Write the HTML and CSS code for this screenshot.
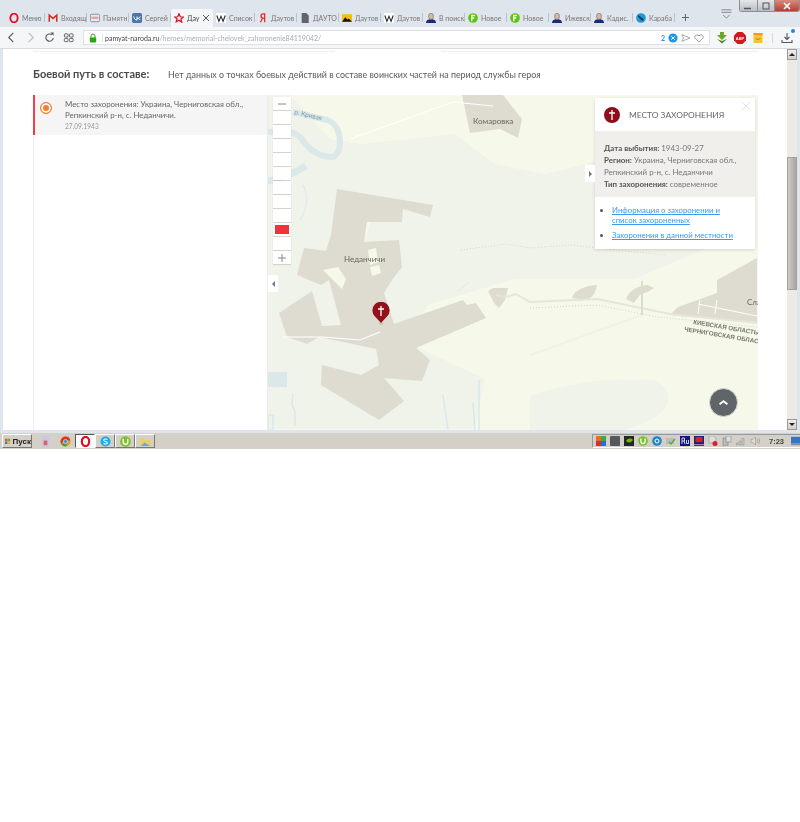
FILE: index.html
```html
<!DOCTYPE html>
<html lang="ru">
<head>
    <meta charset="UTF-8">
    <meta name="viewport" content="width=device-width, initial-scale=1.0">
    <title>Память народа</title>
    <link rel="stylesheet" href="styles.css">
</head>
<body>
    <svg class="sprites" width="0" height="0">
        <symbol id="ic-person" viewBox="0 0 12 12">
            <path d="M0 12c0-3 2-4 4-4.500h4c2 .5 4 1.500 4 4.500z" fill="#1c2a78"/>
            <ellipse cx="6" cy="4" rx="3" ry="3.700" fill="#d8b9a0" stroke="#555" stroke-width=".6"/>
        </symbol>
        <symbol id="ic-f" viewBox="0 0 12 12">
            <circle cx="6" cy="6" r="5.800" fill="#5ac40e"/>
            <path d="M4.500 10V3h4M4.500 6h3" fill="none" stroke="#fff" stroke-width="1.600"/>
        </symbol>
        <symbol id="ic-w" viewBox="0 0 12 12">
            <rect width="12" height="12" rx="1.500" fill="#fff"/>
            <path d="M1 3l2.500 7L6 4l2.500 6L11 3" fill="none" stroke="#222" stroke-width="1.300"/>
        </symbol>
        <symbol id="ic-cross" viewBox="0 0 16 16">
            <path d="M8 3v10M5 6h6" fill="none" stroke="#fff" stroke-width="1.300"/>
        </symbol>
        <symbol id="tray-ut" viewBox="0 0 12 12">
            <circle cx="6" cy="6" r="5.800" fill="#7cc02c"/>
            <path d="M3.500 3v3.500a2.500 2.500 0 0 0 5 0V3" fill="none" stroke="#fff" stroke-width="1.500"/>
        </symbol>
    </svg>

    <div class="window">
        <div class="tabbar">
            <div class="tab tab-menu">
                <svg class="fav" viewBox="0 0 12 12"><ellipse cx="6" cy="6" rx="4.400" ry="5.200" fill="none" stroke="#e0101f" stroke-width="2.200"/></svg>
                <span class="tab-text">Меню</span>
            </div>
            <div class="tab">
                <svg class="fav" viewBox="0 0 12 12"><path d="M1.500 10.500V2.500L6 6.500l4.500-4v8" fill="none" stroke="#d22c20" stroke-width="1.800"/></svg>
                <span class="tab-text">Входящ</span>
            </div>
            <div class="tab">
                <svg class="fav" viewBox="0 0 12 12"><rect x=".5" y="1.500" width="11" height="9" rx="1.500" fill="#e4e8f0" stroke="#7c8398"/><rect x="2" y="4.500" width="8" height="2.500" fill="#e79a9a"/></svg>
                <span class="tab-text">Памятн</span>
            </div>
            <div class="tab">
                <svg class="fav" viewBox="0 0 12 12"><rect width="12" height="12" rx="2" fill="#4a76a8"/><path d="M2 4c.5 3 2 4.500 4 4.500V4M10 4C9.500 5.500 8 6.500 6 6.500c2 0 3.500 1 4 2" fill="none" stroke="#fff" stroke-width="1.100"/></svg>
                <span class="tab-text">Сергей</span>
            </div>
            <div class="tab tab-active">
                <svg class="fav" viewBox="0 0 12 12"><path d="M6 1l1.500 3.500 3.800.3-2.900 2.500.9 3.700L6 8.600l-3.300 1.900.9-3.700L.7 4.800l3.800-.3z" fill="none" stroke="#d8102a" stroke-width="1.500"/></svg>
                <span class="tab-text">Дау</span>
                <svg class="tab-close" viewBox="0 0 8 8"><path d="M1 1l6 6M7 1L1 7" stroke="#555" stroke-width="1"/></svg>
            </div>
            <div class="tab">
                <svg class="fav"><use href="#ic-w"/></svg>
                <span class="tab-text">Список</span>
            </div>
            <div class="tab">
                <svg class="fav" viewBox="0 0 12 12"><path d="M8 11V1H6.500C4.500 1 3.500 2 3.500 3.500S4.500 6 6.500 6H8M5.500 6L3 11" fill="none" stroke="#e8262a" stroke-width="1.500"/></svg>
                <span class="tab-text">Даутов</span>
            </div>
            <div class="tab">
                <svg class="fav" viewBox="0 0 12 12"><path d="M2 0h5.500L10.500 3v9H2z" fill="#60646b"/></svg>
                <span class="tab-text">ДАУТО</span>
            </div>
            <div class="tab">
                <svg class="fav" viewBox="0 0 12 12"><rect y="1.500" width="12" height="9" fill="#f5c000"/><path d="M0 10.500L4 5l2.500 3L8 6.500l4 4z" fill="#111"/></svg>
                <span class="tab-text">Даутов</span>
            </div>
            <div class="tab">
                <svg class="fav"><use href="#ic-w"/></svg>
                <span class="tab-text">Даутов</span>
            </div>
            <div class="tab">
                <svg class="fav"><use href="#ic-person"/></svg>
                <span class="tab-text">В поиск</span>
            </div>
            <div class="tab">
                <svg class="fav"><use href="#ic-f"/></svg>
                <span class="tab-text">Новое</span>
            </div>
            <div class="tab">
                <svg class="fav"><use href="#ic-f"/></svg>
                <span class="tab-text">Новое</span>
            </div>
            <div class="tab">
                <svg class="fav"><use href="#ic-person"/></svg>
                <span class="tab-text">Ижевск</span>
            </div>
            <div class="tab">
                <svg class="fav"><use href="#ic-person"/></svg>
                <span class="tab-text">Кадис.</span>
            </div>
            <div class="tab">
                <svg class="fav" viewBox="0 0 12 12"><circle cx="6" cy="6" r="5.800" fill="#1d9bd8"/><path d="M2.500 2.500l7 5-2 2-5-5z" fill="#1a3350"/></svg>
                <span class="tab-text">Караба</span>
            </div>
            <svg class="tab-plus" viewBox="0 0 8 8"><path d="M4 0v8M0 4h8" stroke="#666" stroke-width="1.200"/></svg>
            <svg class="tab-list" viewBox="0 0 14 12"><path d="M1 1h12M1 4h12" stroke="#777"/><path d="M3 7l4 4 4-4" fill="none" stroke="#777"/></svg>
            <div class="win-controls">
                <div class="win-btn"><svg viewBox="0 0 10 8"><path d="M1 6.500h7" stroke="#555" stroke-width="1.500"/></svg></div>
                <div class="win-btn"><svg viewBox="0 0 10 8"><rect x="2" y="1" width="6" height="6" fill="none" stroke="#555"/></svg></div>
                <div class="win-btn win-close"><svg viewBox="0 0 10 8"><path d="M2 1l6 6M8 1L2 7" stroke="#fff" stroke-width="1.600"/></svg></div>
            </div>
        </div>

        <div class="toolbar">
            <div class="nav">
                <svg class="nav-ic" viewBox="0 0 12 12"><path d="M8 1L3 6l5 5" fill="none" stroke="#555" stroke-width="1.200"/></svg>
                <svg class="nav-ic" viewBox="0 0 12 12"><path d="M4 1l5 5-5 5" fill="none" stroke="#bbb" stroke-width="1.200"/></svg>
                <svg class="nav-ic" viewBox="0 0 12 12"><path d="M10 6.500A4 4 0 1 1 8.500 3" fill="none" stroke="#555" stroke-width="1.200"/><path d="M7 0.500l3.500 0v3.500z" fill="#555"/></svg>
                <svg class="nav-ic" viewBox="0 0 12 12"><g fill="none" stroke="#555"><rect x="1.500" y="2" width="4" height="3.500" rx="1"/><rect x="7" y="2" width="4" height="3.500" rx="1"/><rect x="1.500" y="7" width="4" height="3.500" rx="1"/><rect x="7" y="7" width="4" height="3.500" rx="1"/></g></svg>
            </div>
            <div class="address">
                <svg class="lock" viewBox="0 0 10 12"><path d="M2.500 6V3.500a2.500 2.500 0 0 1 5 0V6" fill="none" stroke="#2e9e1e" stroke-width="1.200"/><rect x="1" y="5.500" width="8" height="6" rx="1" fill="#23a80f"/></svg>
                <span class="url"><b>pamyat-naroda.ru</b>/heroes/memorial-chelovek_zahoronenie84119042/</span>
                <span class="ext-count">2</span>
                <svg class="addr-ic" viewBox="0 0 12 12"><circle cx="6" cy="6" r="5.500" fill="#1f96ee"/><path d="M4 4l4 4M8 4L4 8" stroke="#fff" stroke-width="1.200"/></svg>
                <svg class="addr-ic" viewBox="0 0 12 12"><path d="M1 2l10 4-10 4 2-4z" fill="none" stroke="#999"/></svg>
                <svg class="addr-ic" viewBox="0 0 12 12"><path d="M6 11L1.500 6.500C-.5 3.500 3.500.5 6 3.500c2.500-3 6.500 0 4.500 3z" fill="none" stroke="#888"/></svg>
            </div>
            <div class="tools">
                <svg class="tool" viewBox="0 0 12 12"><path d="M4 0h4v3h3L6 8 1 3h3z" fill="#6fa52a"/><path d="M1 7l5 4.500L11 7l-5 2z" fill="#4c8620"/></svg>
                <svg class="tool" viewBox="0 0 12 12"><path d="M3.500 0h5L12 3.500v5L8.500 12h-5L0 8.500v-5z" fill="#d5181e"/><text x="6" y="7.800" class="abp">ABP</text></svg>
                <svg class="tool" viewBox="0 0 12 12"><rect x="1.500" y="1" width="9" height="10" fill="#f7c233"/><rect x="1.500" y="1" width="9" height="2" fill="#ee9a20"/><path d="M4 6c.5 2 3.500 2 4 0" fill="none" stroke="#c4701a"/></svg>
                <i class="tool-sep"></i>
                <div class="download">
                    <svg class="tool" viewBox="0 0 12 12"><path d="M6 1v6M3.500 5L6 7.500 8.500 5M1 8v2.500h10V8" fill="none" stroke="#555" stroke-width="1.100"/></svg>
                    <i class="download-dot"></i>
                </div>
            </div>
        </div>

        <div class="viewport">
            <main class="page">
                <div class="page-rule"><i></i><i></i></div>
                <div class="route-head">
                    <h2>Боевой путь в составе:</h2>
                    <p>Нет данных о точках боевых действий в составе воинских частей на период службы героя</p>
                </div>
                <div class="route">
                    <aside class="points">
                        <div class="point">
                            <span class="point-radio"></span>
                            <div>
                                <p>Место захоронения: Украина, Черниговская обл., Репкинский р-н, с. Неданчичи.</p>
                                <time>27.09.1943</time>
                            </div>
                        </div>
                    </aside>
                    <div class="map">
                        <svg class="map-art" viewBox="0 0 490 335" preserveAspectRatio="none">
                            <rect width="490" height="335" fill="#f6f9ea"/>
                            <!-- серо-зелёные массивы -->
                            <path d="M0 0h22l40 44 30 5 95-10 40 30 50 10 60-15 40 60 60 30-70 30-120 0-85 25-30 35 85 40-10 50H0z" fill="#f0f3ea"/>
                            <path d="M262 300c40-12 80-18 125-15 30 20 5 40-30 50H262z" fill="#f0f3ea"/>
                            <path d="M200 38l15-8 8 12-5 10-8-6z M82 30c-3-15-12-25-22-33l-10 8 20 30z" fill="#f6f9ea"/>
                            <path d="M80 120l15-8 10 8-10 30-20 8z" fill="#f6f9ea"/>
                            <!-- вода -->
                            <path d="M25 17l34 8c10 3 13 14 13 22 0 8-3 16-10 15-12-1-22-8-30-20-6-6-20-6-32-5" fill="none" stroke="#dbe8ea" stroke-width="6"/>
                            <path d="M0 86c14-2 26-8 38-15" fill="none" stroke="#dbe8ea" stroke-width="7"/>
                            <path d="M35 90c6 10 4 25-3 35" fill="none" stroke="#dbe8ea"/>
                            <rect x="0" y="277" width="19" height="15" fill="#dbe8ea"/>
                            <path d="M25 298l-1 12 3 6 0 15M175 300l5 35M205 308l2 27M211 285v50M0 320h5v15H0z" fill="none" stroke="#dbe8ea" stroke-width="1.500"/>
                            <!-- застройка -->
                            <path d="M194 0h41l19 24-4 19-18-9-30 4z" fill="#dedcd0"/>
                            <path d="M69 94l96 16-3 12-27-8-1 13h-35l-3 20 35-2 3 27-10 13-8 13 10 31 69-24 4 5 9-2 10 15-70 30 14 12-8 21-38-3 20 23-25 19-58-35 1-20 39 10 18-10-3-16-57-12-12 7-20-7-8-24 33-22 10 35 19-1-12-45-8 5-24-10 7-27 22 3 5-16z" fill="#dedcd0"/>
                            <path d="M449 185l40-22v64l-67-5-20-2 8-8 39-14z" fill="#dedcd0"/>
                            <path d="M220 196l5-3 15 0-3 12-6 8-5-5z M304 203c2-8 12-12 25-13-1 8-6 14-10 15z M358 204c3-8 10-13 22-14l6 3c-5 4-8 4-14 7l-6 8z" fill="#dedcd0"/>
                            <path d="M100 155l8-2 2 14-8 3z M102 172l9-2 2 8-9 3z M55 175l15-3 8 12-4 10z" fill="#f6f9ea"/>
                            <path d="M432 205l-2 14M449 205l-2 14M430 209l59 12" fill="none" stroke="#fff" stroke-width="1"/>
                            <!-- дороги -->
                            <path d="M82 44L185 7l40 4M15 242l40 0 37 3 20-8" fill="none" stroke="#fff" stroke-width="1.200"/>
                            <path d="M228 200l10 2 10-3 14 8 67-3 73 15 87 9" fill="none" stroke="#e6e5da" stroke-width="2"/>
                            <path d="M262 213l67-3 60 12 100 10" fill="none" stroke="#d5d4c8" stroke-dasharray="1 2"/>
                            <path d="M193 155l15-2 30-4 25 4 40-3 45 5 50 5M200 188l-10 8" fill="none" stroke="#c9c9bd" stroke-width=".7" stroke-dasharray="1 2"/>
                            <path d="M262 260l112-40" fill="none" stroke="#eff2e6" stroke-width="2"/>
                            <path d="M374 186v34" stroke="#dedcd0" stroke-width="2"/>
                            <!-- подписи -->
                            <text x="26" y="19" class="lbl-river" transform="rotate(13 26 19)">р. Кривая</text>
                            <text x="205" y="29" class="lbl">Комаровка</text>
                            <text x="76" y="167" class="lbl">Неданчичи</text>
                            <text x="479" y="210" class="lbl">Сла</text>
                            <text x="425" y="229" class="lbl-region" transform="rotate(9.500 425 229)">КИЕВСКАЯ ОБЛАСТЬ</text>
                            <text x="416" y="236" class="lbl-region" transform="rotate(9.500 416 236)">ЧЕРНИГОВСКАЯ ОБЛАСТЬ</text>
                        </svg>

                        <div class="zoom">
                            <div class="zoom-cell"><svg viewBox="0 0 10 10"><path d="M1 5h8" stroke="#888"/></svg></div>
                            <div class="zoom-cell"></div>
                            <div class="zoom-cell"></div>
                            <div class="zoom-cell"></div>
                            <div class="zoom-cell"></div>
                            <div class="zoom-cell"></div>
                            <div class="zoom-cell"></div>
                            <div class="zoom-cell"></div>
                            <div class="zoom-cell"></div>
                            <div class="zoom-cell zoom-on"><i></i></div>
                            <div class="zoom-cell"></div>
                            <div class="zoom-cell"><svg viewBox="0 0 10 10"><path d="M1 5h8M5 1v8" stroke="#888"/></svg></div>
                        </div>

                        <div class="side-toggle"><i></i></div>

                        <svg class="pin" viewBox="0 0 18 24">
                            <ellipse cx="9" cy="21.500" rx="2.500" ry="1.500" fill="#c8c8bc"/>
                            <path d="M9 21L3 14.500A8.600 8.600 0 1 1 15 14.500z" fill="#94111c"/>
                            <use href="#ic-cross" x="1" y="1" width="16" height="16"/>
                        </svg>

                        <div class="info">
                            <div class="info-toggle"><i></i></div>
                            <svg class="info-close" viewBox="0 0 10 10"><path d="M.5.500l9 9M9.500.500l-9 9" stroke="#e4e4e0"/></svg>
                            <div class="info-head">
                                <svg class="info-icon" viewBox="0 0 16 16"><circle cx="8" cy="8" r="8" fill="#8e0f1a"/><use href="#ic-cross" width="16" height="16"/></svg>
                                <h3>Место захоронения</h3>
                            </div>
                            <div class="info-body">
                                <p><b>Дата выбытия:</b> 1943-09-27</p>
                                <p><b>Регион:</b> Украина, Черниговская обл., Репкинский р-н, с. Неданчичи</p>
                                <p><b>Тип захоронения:</b> современное</p>
                            </div>
                            <ul class="info-links">
                                <li><a href="#">Информация о захоронении и список захороненных</a></li>
                                <li><a href="#">Захоронения в данной местности</a></li>
                            </ul>
                        </div>

                        <div class="to-top"><svg viewBox="0 0 12 8"><path d="M1.500 6L6 2.500 10.500 6" fill="none" stroke="#fff" stroke-width="2"/></svg></div>
                    </div>
                </div>
            </main>
            <div class="scrollbar">
                <div class="sb-btn"><i class="sb-up"></i></div>
                <div class="sb-track"><div class="sb-thumb"></div></div>
                <div class="sb-btn"><i class="sb-down"></i></div>
            </div>
        </div>

        <div class="taskbar">
            <div class="start">
                <svg class="start-flag" viewBox="0 0 10 10"><rect width="4.500" height="4.500" fill="#e2552c"/><rect x="5" width="4.500" height="4.500" fill="#6cab2e"/><rect y="5" width="4.500" height="4.500" fill="#3a7fd0"/><rect x="5" y="5" width="4.500" height="4.500" fill="#eeb820"/></svg>
                <span>Пуск</span>
            </div>
            <div class="quick">
                <span class="task"><svg viewBox="0 0 12 12"><rect x="2" y="0" width="8" height="12" rx="2" fill="#c8c8e2"/><rect x="4" y="5" width="4" height="5" fill="#e0606a"/></svg></span>
                <span class="task"><svg viewBox="0 0 12 12"><circle cx="6" cy="6" r="5.500" fill="#e0a020"/><path d="M6 .5A5.500 5.500 0 0 0 1.500 9L4 5h7.300A5.500 5.500 0 0 0 6 .5z" fill="#d8372c"/><path d="M1.500 9A5.500 5.500 0 0 0 6.500 11.500L8 8H4z" fill="#3f9e3f"/><circle cx="6" cy="6" r="2.200" fill="#4a86d8" stroke="#fff" stroke-width=".6"/></svg></span>
                <span class="task task-on"><svg viewBox="0 0 12 12"><ellipse cx="6" cy="6" rx="4" ry="5" fill="none" stroke="#e0101f" stroke-width="2.400"/></svg></span>
                <span class="task task-btn"><svg viewBox="0 0 12 12"><circle cx="6" cy="6" r="5.500" fill="#1ea8e6"/><path d="M8 4c-1-1.200-4-1-4 .6S8 6 8 7.500 5 9.200 4 8" fill="none" stroke="#fff" stroke-width="1.100"/></svg></span>
                <span class="task task-btn"><svg><use href="#tray-ut"/></svg></span>
                <span class="task task-btn"><svg viewBox="0 0 12 12"><path d="M0 3h5l1 1h6v7H0z" fill="#e8cf6a"/><path d="M1 11l4-4 6 4z" fill="#6aa8d8"/></svg></span>
            </div>
            <div class="tray">
                <svg class="tray-ic" viewBox="0 0 10 10"><rect width="5" height="5" fill="#e8701c"/><rect x="5" width="5" height="5" fill="#3da84a"/><rect y="5" width="5" height="5" fill="#d82e2e"/><rect x="5" y="5" width="5" height="5" fill="#2a6ed0"/></svg>
                <svg class="tray-ic" viewBox="0 0 10 10"><rect width="10" height="10" rx="1" fill="#55585c"/></svg>
                <svg class="tray-ic" viewBox="0 0 10 10"><rect width="10" height="10" fill="#23282a"/><path d="M2 5c2-3 5-3 7-1-2 3-5 3-7 1z" fill="#76b900"/></svg>
                <svg class="tray-ic"><use href="#tray-ut"/></svg>
                <svg class="tray-ic" viewBox="0 0 10 10"><circle cx="5" cy="5" r="4.800" fill="#1c86c8"/><circle cx="5" cy="5" r="2" fill="none" stroke="#fff"/></svg>
                <svg class="tray-ic" viewBox="0 0 10 10"><rect y="2" width="8" height="6" fill="#bbb"/><path d="M3 6l2 2 4-5" fill="none" stroke="#4ab82a" stroke-width="1.500"/></svg>
                <svg class="tray-ic" viewBox="0 0 10 10"><rect width="10" height="10" fill="#14147e"/><path d="M2 8V2h2.500v3H2M4 5l1 3M6.500 4v3.500H8.500V4" fill="none" stroke="#fff" stroke-width=".8"/></svg>
                <svg class="tray-ic" viewBox="0 0 10 10"><rect width="10" height="8" fill="#22226e"/><rect x="1.500" y="1" width="7" height="5" fill="#d81f2a"/><rect y="8.500" width="10" height="1.500" fill="#446"/></svg>
                <svg class="tray-ic" viewBox="0 0 10 10"><path d="M1 0h5l2 2v5H1z" fill="#ddd" stroke="#888" stroke-width=".5"/><circle cx="7" cy="7.500" r="2.500" fill="#d8202a"/></svg>
                <svg class="tray-ic" viewBox="0 0 10 10"><rect x="1" y="2" width="5" height="8" fill="#bbb" stroke="#777" stroke-width=".5"/><rect x="4" y="0" width="5" height="6" fill="#ddd" stroke="#777" stroke-width=".5"/></svg>
                <svg class="tray-ic" viewBox="0 0 10 10"><path d="M0 9h2V7H0zM3 9h2V5H3zM6 9h2V2.500H6z" fill="#ccc" stroke="#888" stroke-width=".5"/></svg>
                <svg class="tray-ic" viewBox="0 0 10 10"><path d="M1 3.500h2L5.500 1v8L3 6.500H1z" fill="#ddd" stroke="#888" stroke-width=".5"/><path d="M7 3c1 1 1 3 0 4M8.500 2c1.500 2 1.500 4 0 6" fill="none" stroke="#999" stroke-width=".7"/></svg>
                <span class="clock">7:23</span>
                <svg class="tray-ic tray-screen" viewBox="0 0 12 10"><rect width="12" height="8" fill="#2f78c8"/><rect y="8" width="12" height="2" fill="#889"/></svg>
            </div>
        </div>
    </div>
</body>
</html>
```

FILE: styles.css
```css
* {
    box-sizing: border-box;
}
body {
    margin: 0;
    background-color: #fff;
    font-family: Lato, Arial, sans-serif;
    color: #555;
}
.sprites {
    position: absolute;
}
.window {
    height: 449px;
    display: flex;
    flex-direction: column;
    overflow: hidden;
    background-color: #dfe5ec;
    filter: blur(0.35px);
}

/* вкладки */
.tabbar {
    height: 27px;
    display: flex;
    padding-left: 3px;
    flex-shrink: 0;
}
.tab {
    width: 42px;
    height: 18px;
    margin-top: 9px;
    padding-left: 3px;
    display: flex;
    align-items: center;
    gap: 3px;
    position: relative;
    flex-shrink: 0;
    font-size: 7px;
    color: #777;
}
.tab::after {
    content: "";
    position: absolute;
    right: 0;
    top: 4px;
    width: 1px;
    height: 9px;
    background-color: #bcc2ca;
}
.tab-menu {
    padding-left: 6px;
}
.tab-active {
    background-color: #f4f6f8;
    border-radius: 2px 2px 0 0;
    color: #444;
}
.tab-active::after {
    display: none;
}
.fav {
    width: 10px;
    height: 10px;
    flex-shrink: 0;
}
.tab-text {
    flex: 1;
    white-space: nowrap;
}
.tab-close {
    width: 8px;
    height: 8px;
    margin-right: 4px;
    flex-shrink: 0;
}
.tab-plus {
    width: 7px;
    height: 7px;
    margin: 14px 0 0 7px;
}
.tab-list {
    width: 13px;
    height: 10px;
    margin: 9px 0 0 31px;
}
.win-controls {
    display: flex;
    height: 12px;
    margin-left: 6px;
    border: 1px solid #8a8f96;
    border-top: 0;
    border-radius: 0 0 3px 3px;
    overflow: hidden;
}
.win-btn {
    width: 18px;
    background: linear-gradient(#e4e6e8, #b9bec4);
    border-right: 1px solid #8a8f96;
    display: flex;
    align-items: center;
    justify-content: center;
}
.win-btn svg {
    width: 10px;
    height: 8px;
}
.win-close {
    width: 24px;
    border-right: 0;
    background: linear-gradient(#d98a80, #b5402f);
}

/* адресная строка */
.toolbar {
    height: 22px;
    display: flex;
    align-items: center;
    padding-left: 6px;
    background-color: #f4f6f8;
    border-bottom: 1px solid #d9dde2;
    flex-shrink: 0;
}
.nav {
    display: flex;
    gap: 8px;
    width: 77px;
}
.nav-ic {
    width: 11px;
    height: 11px;
}
.address {
    width: 627px;
    height: 15px;
    display: flex;
    align-items: center;
    padding: 0 5px;
    background-color: #fff;
    border: 1px solid #dde0e4;
    font-size: 7px;
    gap: 2px;
}
.lock {
    width: 8px;
    height: 10px;
    margin-right: 3px;
}
.url {
    flex: 1;
    color: #a9adb2;
    white-space: nowrap;
    border-left: 1px solid #e4e4e4;
    padding-left: 2px;
}
.url b {
    font-weight: 400;
    color: #444;
}
.ext-count {
    color: #2b8fe8;
    font-weight: 700;
}
.addr-ic {
    width: 10px;
    height: 10px;
    margin-left: 1px;
}
.tools {
    display: flex;
    align-items: center;
    gap: 6px;
    margin-left: 6px;
}
.tool {
    width: 12px;
    height: 12px;
    display: block;
}
.abp {
    font: 700 4px "Liberation Sans", sans-serif;
    fill: #fff;
    text-anchor: middle;
}
.tool-sep {
    width: 1px;
    height: 10px;
    margin: 0 2px;
    background-color: #d4d8dc;
}
.download {
    position: relative;
}
.download-dot {
    position: absolute;
    top: -3px;
    right: -2px;
    width: 4px;
    height: 4px;
    border-radius: 50%;
    background-color: #1a88ea;
}

/* страница */
.viewport {
    height: 381px;
    display: flex;
    padding: 0 3px;
    flex-shrink: 0;
}
.page {
    flex: 1;
    min-width: 0;
    background-color: #fff;
    overflow: hidden;
    padding-left: 30px;
}
.page-rule {
    width: 725px;
    height: 3px;
    display: flex;
    justify-content: space-between;
}
.page-rule i {
    width: 302px;
    border-bottom: 1px solid #eee;
}
.page-rule i + i {
    width: 317px;
}
.route-head {
    height: 43px;
    display: flex;
    align-items: center;
    padding-top: 2px;
}
.route-head h2 {
    width: 135px;
    margin: 0 0 2px 0;
    font-size: 11px;
    font-weight: 700;
    color: #4a4a4a;
    white-space: nowrap;
}
.route-head p {
    margin: 0;
    font-size: 8.900px;
    color: #5a5a5a;
    white-space: nowrap;
}
.route {
    width: 725px;
    height: 335px;
    display: flex;
}
.points {
    width: 235px;
    flex-shrink: 0;
    border-left: 1px solid #ececec;
    border-right: 1px solid #ececec;
}
.point {
    height: 40px;
    display: flex;
    gap: 13px;
    padding: 4px 6px 0 5px;
    margin-left: -1px;
    background-color: #f5f5f5;
    border-left: 2px solid #ef3f4a;
}
.point-radio {
    width: 12px;
    height: 12px;
    margin-top: 3px;
    flex-shrink: 0;
    border: 1px solid #f0802a;
    border-radius: 50%;
    background-color: #f0802a;
    box-shadow: inset 0 0 0 2px #f7f7f7;
}
.point p {
    margin: 0;
    font-size: 7.900px;
    line-height: 11px;
    color: #666;
}
.point time {
    display: block;
    font-size: 6.600px;
    line-height: 11px;
    color: #999;
}

/* карта */
.map {
    position: relative;
    width: 490px;
    height: 335px;
    flex-shrink: 0;
    overflow: hidden;
}
.map-art {
    display: block;
    width: 490px;
    height: 335px;
}
.lbl {
    font: 8px Lato, sans-serif;
    fill: #66665e;
}
.lbl-river {
    font: 6.500px Lato, sans-serif;
    fill: #7d97a6;
}
.lbl-region {
    font: 700 6.200px "Liberation Sans", sans-serif;
    fill: #77776e;
}
.zoom {
    position: absolute;
    left: 5px;
    top: 2px;
    width: 18px;
    display: flex;
    flex-direction: column;
    gap: 1px;
}
.zoom-cell {
    height: 13px;
    background-color: #fff;
    box-shadow: 0 1px 1px rgba(0, 0, 0, 0.12);
    display: flex;
    align-items: center;
    justify-content: center;
}
.zoom-cell svg {
    width: 10px;
    height: 10px;
}
.zoom-on i {
    width: 14px;
    height: 9px;
    background-color: #f5303c;
}
.side-toggle {
    position: absolute;
    left: 0;
    top: 180px;
    width: 10px;
    height: 17px;
    background-color: #fff;
    display: flex;
    align-items: center;
    justify-content: center;
}
.side-toggle i {
    border: 3px solid transparent;
    border-left-width: 0;
    border-right: 3px solid #777;
}
.pin {
    position: absolute;
    left: 104px;
    top: 207px;
    width: 18px;
    height: 24px;
}
.info {
    position: absolute;
    left: 327px;
    top: 3px;
    width: 160px;
    height: 151px;
    background-color: #fff;
    box-shadow: 0 1px 3px rgba(0, 0, 0, 0.15);
}
.info-toggle {
    position: absolute;
    left: -10px;
    top: 67px;
    width: 10px;
    height: 17px;
    background-color: #fff;
    display: flex;
    align-items: center;
    justify-content: center;
}
.info-toggle i {
    border: 3px solid transparent;
    border-right-width: 0;
    border-left: 3px solid #777;
}
.info-close {
    position: absolute;
    right: 4px;
    top: 3px;
    width: 10px;
    height: 10px;
}
.info-head {
    height: 33px;
    display: flex;
    align-items: center;
    gap: 9px;
    padding-left: 9px;
}
.info-icon {
    width: 16px;
    height: 16px;
}
.info-head h3 {
    margin: 0;
    font-size: 8.400px;
    font-weight: 400;
    text-transform: uppercase;
    color: #666;
    white-space: nowrap;
}
.info-body {
    height: 66px;
    padding: 11px 9px 0;
    background-color: #f1efec;
    font-size: 7.900px;
    line-height: 12px;
    color: #777;
}
.info-body p {
    margin: 0;
}
.info-body b {
    color: #555;
}
.info-links {
    margin: 0;
    padding: 8px 10px 0 17px;
    font-size: 7.800px;
    line-height: 10px;
}
.info-links li {
    margin-bottom: 5px;
    color: #555;
}
.info-links a {
    color: #3a9af0;
}
.to-top {
    position: absolute;
    left: 441px;
    top: 293px;
    width: 29px;
    height: 29px;
    border-radius: 50%;
    background-color: #5f6568;
    border: 1px solid #d8dad4;
    display: flex;
    align-items: center;
    justify-content: center;
}
.to-top svg {
    width: 11px;
    height: 7px;
}

/* прокрутка */
.scrollbar {
    width: 10px;
    display: flex;
    flex-direction: column;
    background-color: #ebeae6;
    flex-shrink: 0;
}
.sb-btn {
    height: 11px;
    flex-shrink: 0;
    background: linear-gradient(#f0efeb, #d4d0c8);
    border: 1px solid #999;
    display: flex;
    align-items: center;
    justify-content: center;
}
.sb-up {
    border: 3px solid transparent;
    border-top-width: 0;
    border-bottom: 3px solid #222;
}
.sb-down {
    border: 3px solid transparent;
    border-bottom-width: 0;
    border-top: 3px solid #222;
}
.sb-track {
    flex: 1;
    padding-top: 97px;
}
.sb-thumb {
    height: 133px;
    background: linear-gradient(90deg, #cfccc5, #a9a69f);
    border: 1px solid #a4a19a;
}

/* панель задач */
.taskbar {
    height: 16px;
    margin-top: 3px;
    display: flex;
    align-items: center;
    padding: 0 0 0 2px;
    background-color: #d4d0c8;
    flex-shrink: 0;
}
.start {
    width: 30px;
    height: 14px;
    display: flex;
    align-items: center;
    gap: 2px;
    padding-left: 2px;
    border: 1px solid #777;
    border-top-color: #fff;
    border-left-color: #fff;
    font: 700 8px "Liberation Sans", sans-serif;
    color: #222;
}
.start-flag {
    width: 9px;
    height: 9px;
}
.quick {
    display: flex;
    margin-left: 3px;
}
.task {
    width: 20px;
    height: 14px;
    display: flex;
    align-items: center;
    justify-content: center;
}
.task svg {
    width: 11px;
    height: 11px;
}
.task-on {
    background-color: #fff;
    border: 1px solid #555;
    border-right-color: #fff;
    border-bottom-color: #fff;
}
.task-btn {
    border: 1px solid #777;
    border-top-color: #fff;
    border-left-color: #fff;
}
.tray {
    margin-left: auto;
    width: 208px;
    height: 14px;
    display: flex;
    align-items: center;
    gap: 4px;
    padding-left: 3px;
    border: 1px solid #999;
    border-right: 0;
    border-bottom-color: #fff;
}
.tray-ic {
    width: 10px;
    height: 10px;
    flex-shrink: 0;
}
.tray-screen {
    margin-left: auto;
    margin-right: 1px;
}
.clock {
    margin: 0 3px 0 5px;
    font: 700 7.500px "Liberation Sans", sans-serif;
    color: #444;
}
```
